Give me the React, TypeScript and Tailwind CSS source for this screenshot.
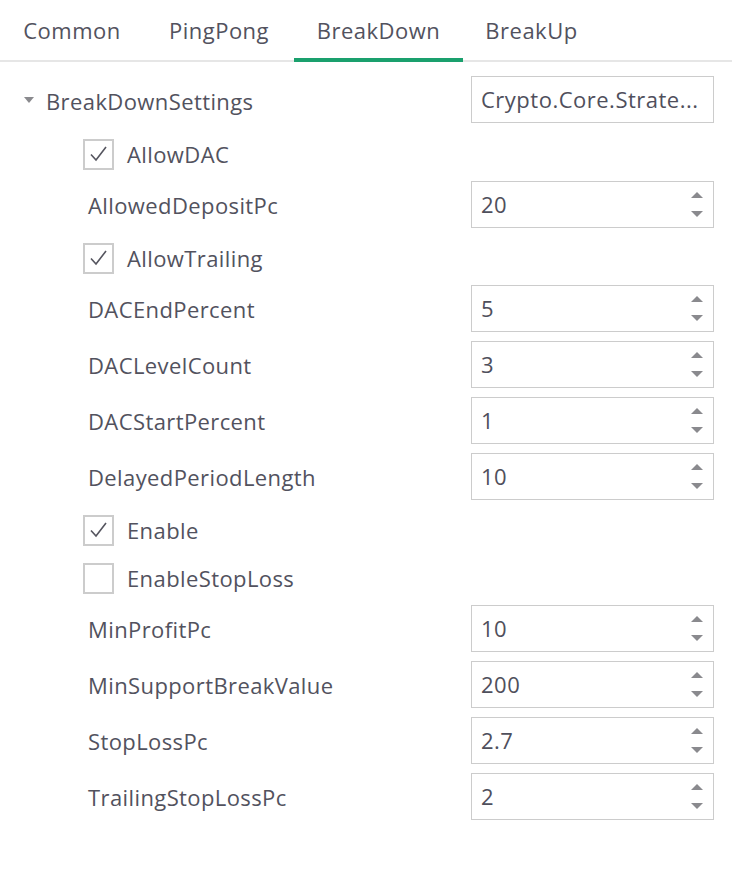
import React from "react";

type Row =
  | { kind: "input"; label: string; value: string }
  | { kind: "check"; label: string; checked: boolean };

const rows: Row[] = [
  { kind: "check", label: "AllowDAC", checked: true },
  { kind: "input", label: "AllowedDepositPc", value: "20" },
  { kind: "check", label: "AllowTrailing", checked: true },
  { kind: "input", label: "DACEndPercent", value: "5" },
  { kind: "input", label: "DACLevelCount", value: "3" },
  { kind: "input", label: "DACStartPercent", value: "1" },
  { kind: "input", label: "DelayedPeriodLength", value: "10" },
  { kind: "check", label: "Enable", checked: true },
  { kind: "check", label: "EnableStopLoss", checked: false },
  { kind: "input", label: "MinProfitPc", value: "10" },
  { kind: "input", label: "MinSupportBreakValue", value: "200" },
  { kind: "input", label: "StopLossPc", value: "2.7" },
  { kind: "input", label: "TrailingStopLossPc", value: "2" },
];

const tabs = [
  { label: "Common", w: "w-[144px]" },
  { label: "PingPong", w: "w-[150px]" },
  { label: "BreakDown", w: "w-[169px]", active: true },
  { label: "BreakUp", w: "w-[137px]" },
];

function Spinner() {
  return (
    <div className="flex flex-col items-center gap-[13px] mr-[10px]">
      <svg width="12" height="6" viewBox="0 0 12 6">
        <path d="M6 0 L12 6 L0 6 Z" fill="#8a8a8e" />
      </svg>
      <svg width="12" height="6" viewBox="0 0 12 6">
        <path d="M0 0 L12 0 L6 6 Z" fill="#8a8a8e" />
      </svg>
    </div>
  );
}

function Box({ value, spinner }: { value: string; spinner?: boolean }) {
  return (
    <div className="w-[243px] h-[47px] border border-[#cccccc] bg-white flex items-center justify-between pl-[9px]">
      <span className="text-[22px] tracking-[0.5px] text-[#4f4f5c] whitespace-nowrap overflow-hidden">{value}</span>
      {spinner && <Spinner />}
    </div>
  );
}

function Check({ checked }: { checked: boolean }) {
  return (
    <div className="w-[31px] h-[31px] border-2 border-[#cccccc] bg-white flex items-center justify-center">
      {checked && (
        <svg width="22" height="22" viewBox="0 0 22 22">
          <path d="M3 11.5 L8 17 L18 4" fill="none" stroke="#55555f" strokeWidth="1.6" />
        </svg>
      )}
    </div>
  );
}

export default function App() {
  return (
    <div
      className="w-[732px] h-[878px] bg-white text-[#52525e] tracking-[0.4px]"
      style={{ fontFamily: '"Open Sans", "Noto Sans", sans-serif' }}
    >
      <div className="flex h-[62px] border-b-2 border-[#e6e6e6]">
        {tabs.map((t) => (
          <div
            key={t.label}
            className={`${t.w} flex items-center justify-center text-[22px] tracking-[0.5px] relative`}
          >
            <span>{t.label}</span>
            {t.active && <div className="absolute left-0 right-0 bottom-[-2px] h-[4px] bg-[#1aa06d]" />}
          </div>
        ))}
      </div>
      <div className="pt-[12px] pl-[24px] pr-[18px]">
        <div className="flex justify-between h-[56px] pt-[2px]">
          <div className="flex items-center h-[47px]">
            <svg width="10" height="6" viewBox="0 0 10 6" className="mr-[12px] mt-[1px]">
              <path d="M0 0 L10 0 L5 6 Z" fill="#8a8a8e" />
            </svg>
            <span className="text-[22px] mt-[4px]">BreakDownSettings</span>
          </div>
          <Box value="Crypto.Core.Strate..." />
        </div>
        {rows.map((r) =>
          r.kind === "input" ? (
            <div key={r.label} className="flex justify-between h-[56px] pt-[3px]">
              <div className="flex items-center h-[47px] pl-[64px] text-[22px] pt-[2px]">{r.label}</div>
              <Box value={r.value} spinner />
            </div>
          ) : (
            <div key={r.label} className="flex items-center h-[48px] pl-[59px]">
              <Check checked={r.checked} />
              <span className="ml-[13px] text-[22px]">{r.label}</span>
            </div>
          )
        )}
      </div>
    </div>
  );
}
